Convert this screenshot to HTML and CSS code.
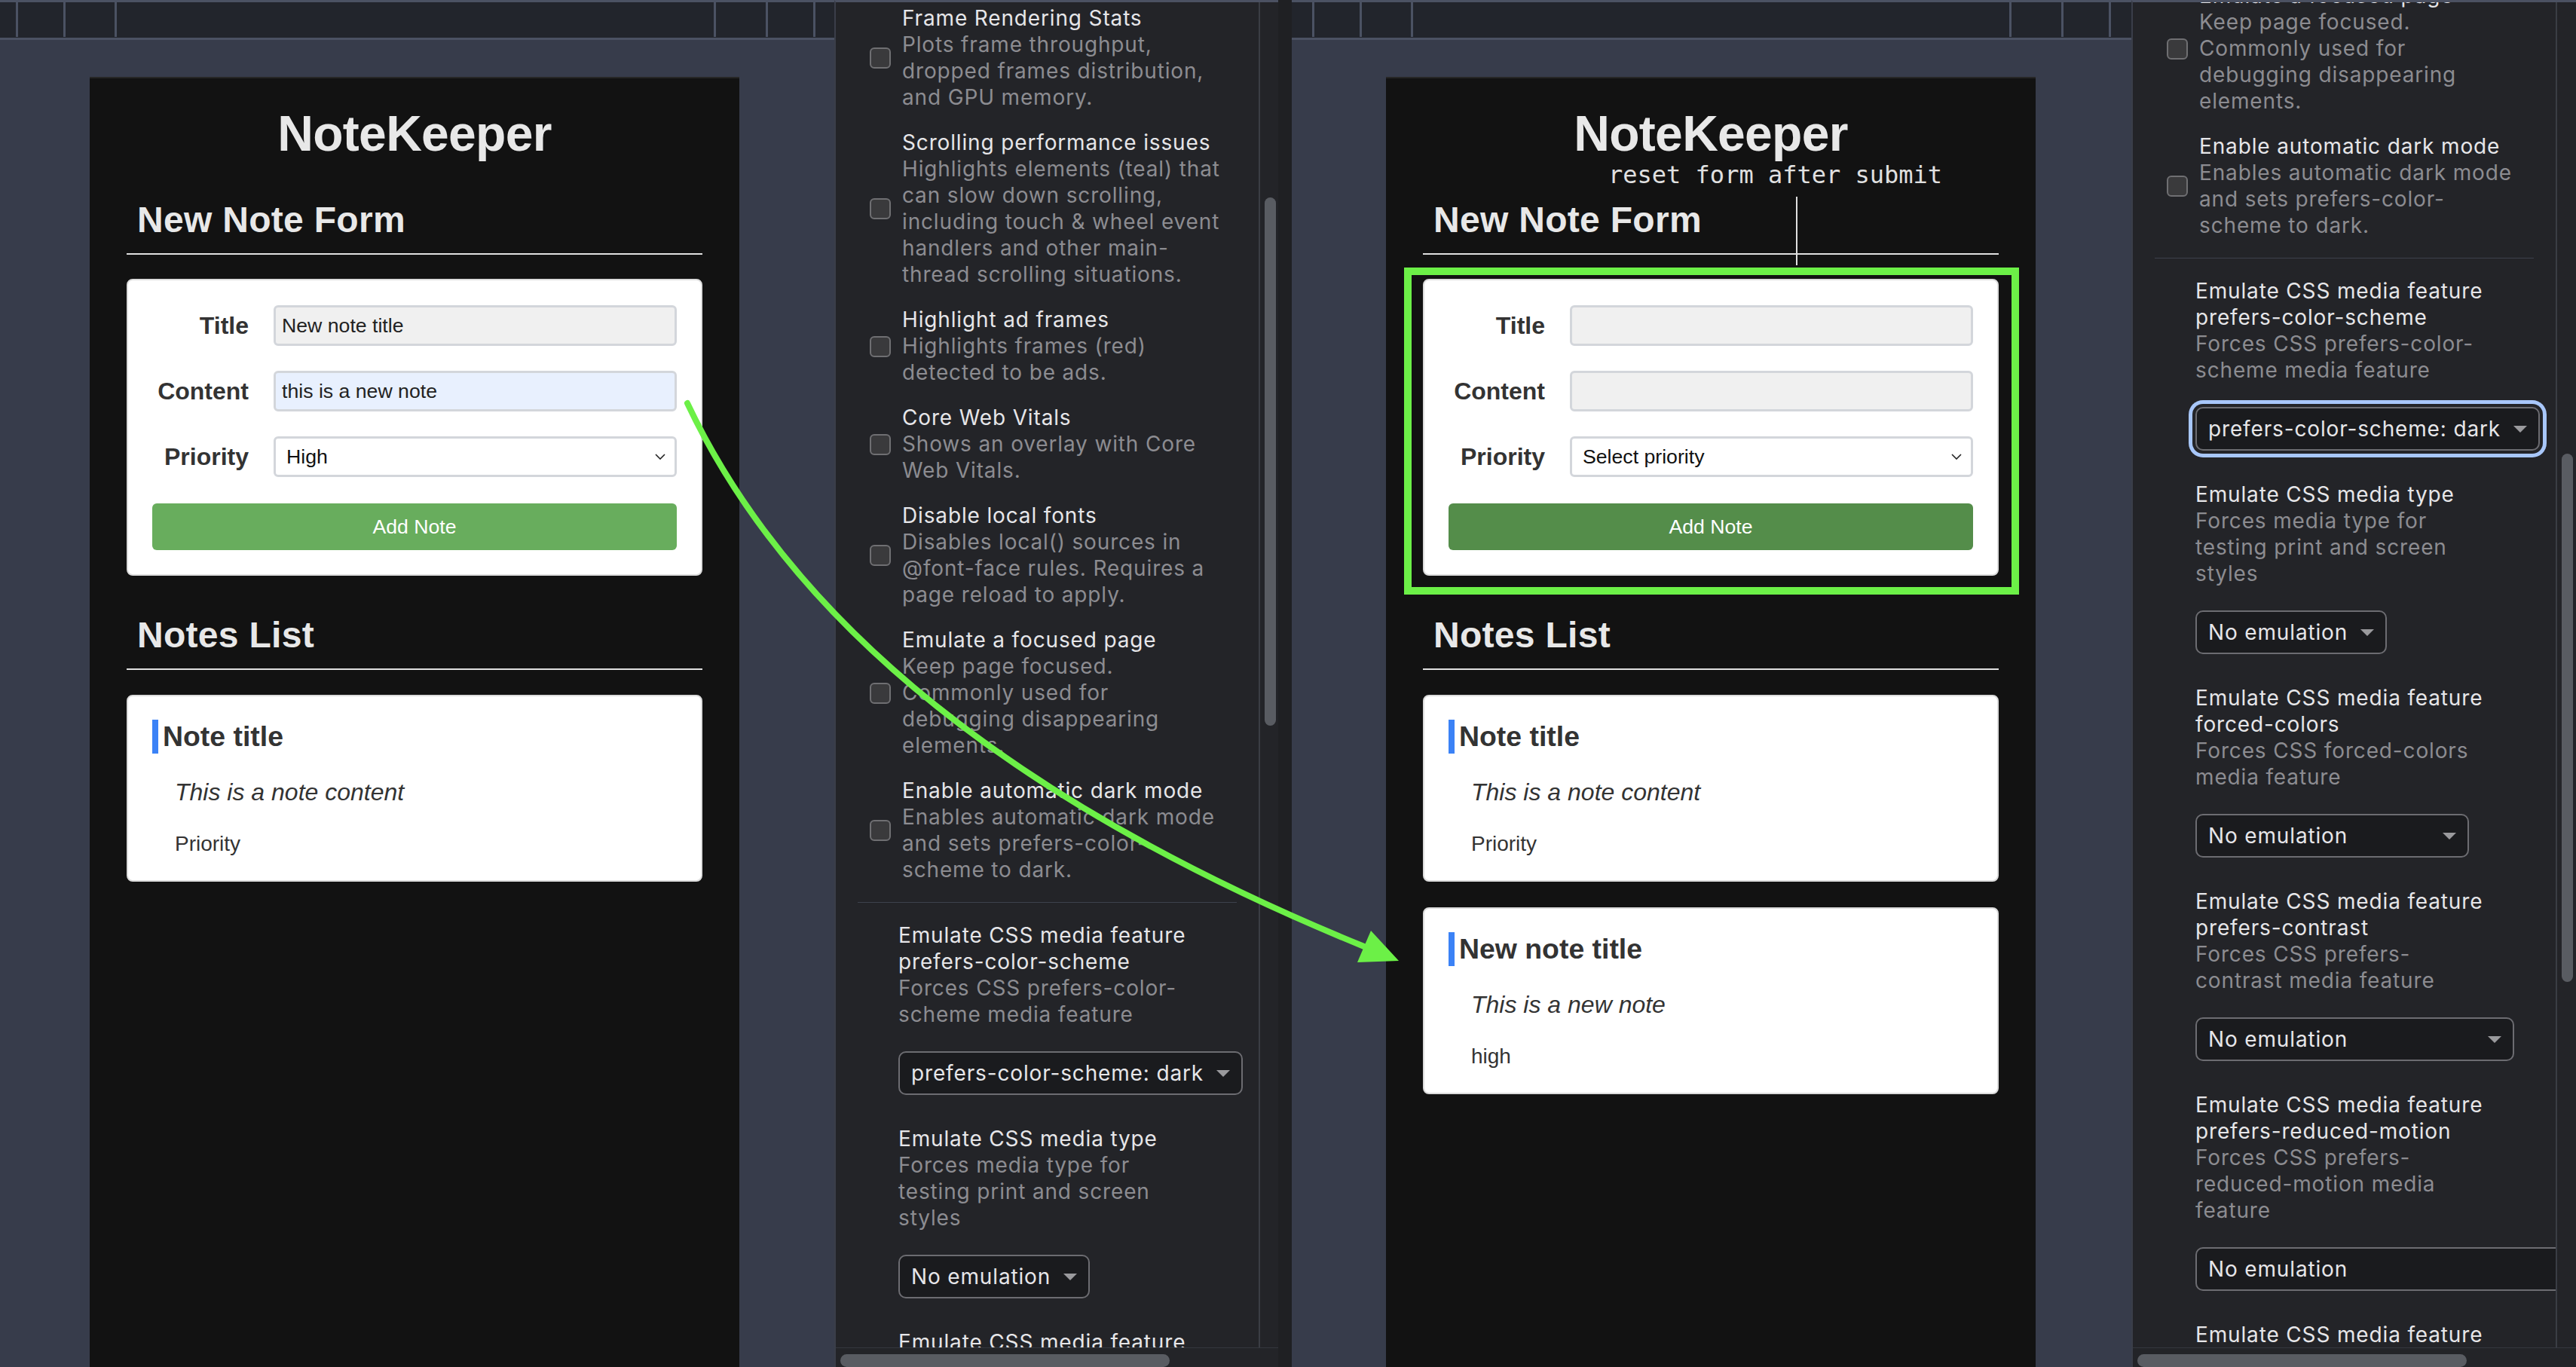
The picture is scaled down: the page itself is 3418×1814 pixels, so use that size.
FILE: index.html
```html
<!DOCTYPE html>
<html lang="en">
<head>
<meta charset="utf-8">
<title>NoteKeeper – reset form after submit</title>
<link rel="stylesheet" href="styles.css">
</head>
<body>
<div class="stage">

  <!-- LEFT: before submit -->
  <section class="viewport vp-left">
    <div class="topbar tb-left">
      <div class="tb-group"><span class="tb-div"></span><span class="tb-div g60"></span><span class="tb-div g65"></span></div>
      <div class="tb-group"><span class="tb-div"></span><span class="tb-div g66"></span><span class="tb-div g60"></span></div>
    </div>
    <div class="canvas cv-left">
      <main class="app">
        <h1 class="app-title">NoteKeeper</h1>
        <h2 class="sec-title">New Note Form</h2>
        <form class="form-card">
          <div class="form-grid">
            <label class="f-label">Title</label>
            <input class="f-input" type="text" value="New note title">
            <label class="f-label">Content</label>
            <input class="f-input autofill" type="text" value="this is a new note">
            <label class="f-label">Priority</label>
            <div class="f-select"><span>High</span><svg width="14" height="8" viewBox="0 0 14 8"><polyline points="1,1 7,7 13,1" fill="none" stroke="#222" stroke-width="1.6"/></svg></div>
          </div>
          <div class="f-btn">Add Note</div>
        </form>
        <h2 class="sec-title sec-notes">Notes List</h2>
        <article class="note">
          <h3 class="note-title">Note title</h3>
          <p class="note-body">This is a note content</p>
          <p class="note-prio">Priority</p>
        </article>
      </main>
    </div>
  </section>

  <aside class="devtools">
    <span class="dt-tabmark"></span>
    <div class="dt-body">
      <div class="dt-main">
        <div class="dt-list sc-a">
          <div class="cb-entry"><span class="cb"></span><div><div class="dt-title">Frame Rendering Stats</div><div class="dt-desc">Plots frame throughput,<br>dropped frames distribution,<br>and GPU memory.</div></div></div>
          <div class="cb-entry"><span class="cb"></span><div><div class="dt-title">Scrolling performance issues</div><div class="dt-desc">Highlights elements (teal) that<br>can slow down scrolling,<br>including touch &amp; wheel event<br>handlers and other main-<br>thread scrolling situations.</div></div></div>
          <div class="cb-entry"><span class="cb"></span><div><div class="dt-title">Highlight ad frames</div><div class="dt-desc">Highlights frames (red)<br>detected to be ads.</div></div></div>
          <div class="cb-entry"><span class="cb"></span><div><div class="dt-title">Core Web Vitals</div><div class="dt-desc">Shows an overlay with Core<br>Web Vitals.</div></div></div>
          <div class="cb-entry"><span class="cb"></span><div><div class="dt-title">Disable local fonts</div><div class="dt-desc">Disables local() sources in<br>@font-face rules. Requires a<br>page reload to apply.</div></div></div>
          <div class="cb-entry"><span class="cb"></span><div><div class="dt-title">Emulate a focused page</div><div class="dt-desc">Keep page focused.<br>Commonly used for<br>debugging disappearing<br>elements.</div></div></div>
          <div class="cb-entry"><span class="cb"></span><div><div class="dt-title">Enable automatic dark mode</div><div class="dt-desc">Enables automatic dark mode<br>and sets prefers-color-<br>scheme to dark.</div></div></div>
          <div class="dt-sep"></div>
          <div class="em-entry"><div class="dt-title">Emulate CSS media feature<br>prefers-color-scheme</div><div class="dt-desc">Forces CSS prefers-color-<br>scheme media feature</div>
            <div class="dt-select w457"><span>prefers-color-scheme: dark</span><svg class="caret" width="18" height="9" viewBox="0 0 18 9"><polygon points="0,0 18,0 9,9" fill="#9a9a9d"/></svg></div></div>
          <div class="em-entry"><div class="dt-title">Emulate CSS media type</div><div class="dt-desc">Forces media type for<br>testing print and screen<br>styles</div>
            <div class="dt-select w254"><span>No emulation</span><svg class="caret" width="18" height="9" viewBox="0 0 18 9"><polygon points="0,0 18,0 9,9" fill="#9a9a9d"/></svg></div></div>
          <div class="em-entry"><div class="dt-title">Emulate CSS media feature<br>forced-colors</div><div class="dt-desc">Forces CSS forced-colors<br>media feature</div>
            <div class="dt-select w363"><span>No emulation</span><svg class="caret" width="18" height="9" viewBox="0 0 18 9"><polygon points="0,0 18,0 9,9" fill="#9a9a9d"/></svg></div></div>
          <div class="em-entry"><div class="dt-title">Emulate CSS media feature<br>prefers-contrast</div><div class="dt-desc">Forces CSS prefers-<br>contrast media feature</div>
            <div class="dt-select w423"><span>No emulation</span><svg class="caret" width="18" height="9" viewBox="0 0 18 9"><polygon points="0,0 18,0 9,9" fill="#9a9a9d"/></svg></div></div>
          <div class="em-entry"><div class="dt-title">Emulate CSS media feature<br>prefers-reduced-motion</div><div class="dt-desc">Forces CSS prefers-<br>reduced-motion media<br>feature</div>
            <div class="dt-select w600"><span>No emulation</span><svg class="caret" width="18" height="9" viewBox="0 0 18 9"><polygon points="0,0 18,0 9,9" fill="#9a9a9d"/></svg></div></div>
          <div class="em-entry"><div class="dt-title">Emulate CSS media feature<br>prefers-reduced-transparency</div></div>
        </div>
      </div>
      <div class="dt-vscroll"><span class="dt-vthumb vt-a"></span></div>
    </div>
    <div class="dt-hscroll"><span class="dt-hthumb"></span></div>
  </aside>

  <div class="strip"></div>

  <!-- RIGHT: after submit -->
  <section class="viewport vp-right">
    <div class="topbar tb-right">
      <div class="tb-group"><span class="tb-div"></span><span class="tb-div g60"></span><span class="tb-div g65"></span></div>
      <div class="tb-group"><span class="tb-div"></span><span class="tb-div g66"></span><span class="tb-div g60"></span></div>
    </div>
    <div class="canvas cv-right">
      <main class="app">
        <h1 class="app-title">NoteKeeper</h1>
        <h2 class="sec-title">New Note Form</h2>
        <form class="form-card">
          <div class="form-grid">
            <label class="f-label">Title</label>
            <input class="f-input" type="text" value="">
            <label class="f-label">Content</label>
            <input class="f-input" type="text" value="">
            <label class="f-label">Priority</label>
            <div class="f-select"><span>Select priority</span><svg width="14" height="8" viewBox="0 0 14 8"><polyline points="1,1 7,7 13,1" fill="none" stroke="#222" stroke-width="1.6"/></svg></div>
          </div>
          <div class="f-btn pressed">Add Note</div>
        </form>
        <h2 class="sec-title sec-notes">Notes List</h2>
        <article class="note">
          <h3 class="note-title">Note title</h3>
          <p class="note-body">This is a note content</p>
          <p class="note-prio">Priority</p>
        </article>
        <article class="note">
          <h3 class="note-title">New note title</h3>
          <p class="note-body">This is a new note</p>
          <p class="note-prio">high</p>
        </article>

        <div class="annot">reset form after submit</div>
        <span class="annot-line"></span>
        <span class="focus-box"></span>
      </main>
    </div>
  </section>

  <aside class="devtools dt-right">
    <span class="dt-tabmark"></span>
    <div class="dt-body">
      <div class="dt-main">
        <div class="dt-list sc-b">
          <div class="cb-entry"><span class="cb"></span><div><div class="dt-title">Frame Rendering Stats</div><div class="dt-desc">Plots frame throughput,<br>dropped frames distribution,<br>and GPU memory.</div></div></div>
          <div class="cb-entry"><span class="cb"></span><div><div class="dt-title">Scrolling performance issues</div><div class="dt-desc">Highlights elements (teal) that<br>can slow down scrolling,<br>including touch &amp; wheel event<br>handlers and other main-<br>thread scrolling situations.</div></div></div>
          <div class="cb-entry"><span class="cb"></span><div><div class="dt-title">Highlight ad frames</div><div class="dt-desc">Highlights frames (red)<br>detected to be ads.</div></div></div>
          <div class="cb-entry"><span class="cb"></span><div><div class="dt-title">Core Web Vitals</div><div class="dt-desc">Shows an overlay with Core<br>Web Vitals.</div></div></div>
          <div class="cb-entry"><span class="cb"></span><div><div class="dt-title">Disable local fonts</div><div class="dt-desc">Disables local() sources in<br>@font-face rules. Requires a<br>page reload to apply.</div></div></div>
          <div class="cb-entry"><span class="cb"></span><div><div class="dt-title">Emulate a focused page</div><div class="dt-desc">Keep page focused.<br>Commonly used for<br>debugging disappearing<br>elements.</div></div></div>
          <div class="cb-entry"><span class="cb"></span><div><div class="dt-title">Enable automatic dark mode</div><div class="dt-desc">Enables automatic dark mode<br>and sets prefers-color-<br>scheme to dark.</div></div></div>
          <div class="dt-sep"></div>
          <div class="em-entry"><div class="dt-title">Emulate CSS media feature<br>prefers-color-scheme</div><div class="dt-desc">Forces CSS prefers-color-<br>scheme media feature</div>
            <div class="dt-select w457 focused"><span>prefers-color-scheme: dark</span><svg class="caret" width="18" height="9" viewBox="0 0 18 9"><polygon points="0,0 18,0 9,9" fill="#9a9a9d"/></svg></div></div>
          <div class="em-entry"><div class="dt-title">Emulate CSS media type</div><div class="dt-desc">Forces media type for<br>testing print and screen<br>styles</div>
            <div class="dt-select w254"><span>No emulation</span><svg class="caret" width="18" height="9" viewBox="0 0 18 9"><polygon points="0,0 18,0 9,9" fill="#9a9a9d"/></svg></div></div>
          <div class="em-entry"><div class="dt-title">Emulate CSS media feature<br>forced-colors</div><div class="dt-desc">Forces CSS forced-colors<br>media feature</div>
            <div class="dt-select w363"><span>No emulation</span><svg class="caret" width="18" height="9" viewBox="0 0 18 9"><polygon points="0,0 18,0 9,9" fill="#9a9a9d"/></svg></div></div>
          <div class="em-entry"><div class="dt-title">Emulate CSS media feature<br>prefers-contrast</div><div class="dt-desc">Forces CSS prefers-<br>contrast media feature</div>
            <div class="dt-select w423"><span>No emulation</span><svg class="caret" width="18" height="9" viewBox="0 0 18 9"><polygon points="0,0 18,0 9,9" fill="#9a9a9d"/></svg></div></div>
          <div class="em-entry"><div class="dt-title">Emulate CSS media feature<br>prefers-reduced-motion</div><div class="dt-desc">Forces CSS prefers-<br>reduced-motion media<br>feature</div>
            <div class="dt-select w600"><span>No emulation</span><svg class="caret" width="18" height="9" viewBox="0 0 18 9"><polygon points="0,0 18,0 9,9" fill="#9a9a9d"/></svg></div></div>
          <div class="em-entry"><div class="dt-title">Emulate CSS media feature<br>prefers-reduced-transparency</div></div>
        </div>
      </div>
      <div class="dt-vscroll"><span class="dt-vthumb vt-b"></span></div>
    </div>
    <div class="dt-hscroll"><span class="dt-hthumb"></span></div>
  </aside>
</div>

<svg class="arrow" width="3418" height="1814" viewBox="0 0 3418 1814">
  <path d="M 912 535 Q 1120 975 1810 1256" fill="none" stroke="#6cf047" stroke-width="8" stroke-linecap="round"/>
  <polygon points="1856,1275 1801,1277 1819,1235" fill="#6cf047"/>
</svg>
</body>
</html>
```

FILE: styles.css
```css
* { box-sizing: border-box; }
html, body { margin: 0; padding: 0; }
body {
  width: 3418px;
  height: 1814px;
  overflow: hidden;
  position: relative;
  background: #202124;
  font-family: "Liberation Sans", Arial, sans-serif;
}
.stage { display: flex; width: 3418px; height: 1814px; }

/* ---------- viewport ---------- */
.viewport {
  display: flex;
  flex-direction: column;
  flex: none;
  height: 1814px;
  background: #373c4b;
}
.vp-left { width: 1107px; }
.vp-right { width: 1114px; }

.topbar {
  flex: none;
  height: 53px;
  background: #22252c;
  border-top: 3px solid #4b5263;
  border-bottom: 3px solid #4b5263;
  display: flex;
  justify-content: space-between;
  align-items: flex-start;
}
.tb-left { padding: 0 25px 0 21px; }
.tb-right { padding: 0 27px 0 27px; }
.tb-group { display: flex; }
.tb-div { width: 3px; height: 46px; background: #4b5263; }
.g60 { margin-left: 60px; }
.g65 { margin-left: 65px; }
.g66 { margin-left: 66px; }

.canvas { flex: 1; padding-top: 49px; overflow: hidden; }
.cv-left { padding-left: 119px; }
.cv-right { padding-left: 125px; }

/* ---------- NoteKeeper app ---------- */
.app {
  position: relative;
  width: 862px;
  height: 100%;
  background: #121212;
  border-top: 2px solid #262626;
  padding: 35px 49px 0;
  color: #e8e8e8;
}
.app-title {
  margin: 0;
  font-size: 66px;
  line-height: 76px;
  font-weight: 700;
  text-align: center;
  letter-spacing: -0.7px;
}
.sec-title {
  margin: 49px 0 0;
  padding: 0 14px 16px;
  font-size: 48px;
  line-height: 56px;
  font-weight: 700;
  letter-spacing: 0.3px;
  border-bottom: 2px solid #e0e0e0;
}
.sec-notes { margin-top: 51px; }

.form-card {
  margin: 32px 0 0;
  background: #fff;
  border: 2px solid #dcdcdc;
  border-radius: 8px;
  padding: 33px 32px 32px;
}
.form-grid {
  display: grid;
  grid-template-columns: 128px 1fr;
  column-gap: 33px;
  row-gap: 33px;
  align-items: center;
}
.f-label {
  text-align: right;
  font-weight: 700;
  font-size: 32px;
  color: #333;
}
.f-input {
  display: block;
  width: 100%;
  height: 54px;
  margin: 0;
  border: 3px solid #d3d6db;
  border-radius: 6px;
  background: #f0f0f0;
  padding: 0 8px;
  font-family: "Liberation Sans", Arial, sans-serif;
  font-size: 26.67px;
  color: #222;
  outline: none;
}
.f-input.autofill { background: #e8f0fe; }
.f-select {
  display: flex;
  align-items: center;
  height: 54px;
  border: 3px solid #d3d6db;
  border-radius: 6px;
  background: #fff;
  padding: 0 12px 0 14px;
  font-size: 26.67px;
  color: #111;
}
.f-select svg { margin-left: auto; flex: none; }
.f-btn {
  display: flex;
  align-items: center;
  justify-content: center;
  margin-top: 35px;
  height: 62px;
  border-radius: 6px;
  background: #68ad5d;
  color: #fff;
  font-size: 26.67px;
}
.f-btn.pressed { background: #548d4a; }

.note {
  margin-top: 33px;
  background: #fff;
  border: 2px solid #dcdcdc;
  border-radius: 8px;
  padding: 31px 32px 32px;
  color: #333;
}
.note + .note { margin-top: 34px; }
.note-title {
  margin: 0;
  font-size: 37.4px;
  line-height: 45px;
  font-weight: 700;
  border-left: 8px solid #3b82f6;
  padding-left: 6px;
}
.note-body {
  margin: 33px 0 0 30px;
  font-size: 32px;
  line-height: 37px;
  font-style: italic;
}
.note-prio {
  margin: 34px 0 0 30px;
  font-size: 28px;
  line-height: 32px;
}

/* annotations on the right screenshot */
.annot {
  position: absolute;
  left: 295px;
  top: 110px;
  font-family: "DejaVu Sans Mono", "Liberation Mono", monospace;
  font-size: 32px;
  line-height: 36px;
  color: #e0e0e0;
  white-space: nowrap;
}
.annot-line {
  position: absolute;
  left: 544px;
  top: 157px;
  width: 2px;
  height: 91px;
  background: #e0e0e0;
}
.focus-box {
  position: absolute;
  left: 24px;
  top: 251px;
  width: 816px;
  height: 434px;
  border: 10px solid #6cf047;
}

/* ---------- DevTools rendering panel ---------- */
.devtools {
  position: relative;
  flex: none;
  width: 589px;
  height: 1814px;
  background: #232428;
  border-top: 3px solid #4b5162;
  border-left: 2px solid #3a3e49;
  display: flex;
  flex-direction: column;
  font-family: Inter, "Noto Sans", sans-serif;
  font-size: 28px;
  line-height: 35px;
  letter-spacing: 0.85px;
  overflow: hidden;
}
.dt-right { width: 590px; }
.dt-tabmark {
  position: absolute;
  left: 172px;
  top: -3px;
  width: 50px;
  height: 3px;
  background: #7b9ee3;
}
.dt-body {
  display: flex;
  flex: none;
  height: 1786px;
  border-bottom: 1px solid #34373e;
}
.dt-main {
  flex: none;
  width: 563px;
  border-right: 2px solid #3a3d44;
  overflow: hidden;
}
.dt-vscroll { flex: 1; }
.dt-vthumb {
  display: block;
  margin-left: 6px;
  width: 15px;
  height: 701px;
  border-radius: 8px;
  background: #595c62;
}
.vt-a { margin-top: 259px; }
.vt-b { margin-top: 599px; }
.dt-hscroll { flex: 1; }
.dt-hthumb {
  display: block;
  margin: 8px 0 0 6px;
  width: 437px;
  height: 17px;
  border-radius: 9px;
  background: #595c62;
}

.dt-list { display: flex; flex-direction: column; }
.sc-a { padding-top: 4px; }
.sc-b { margin-top: -851px; }

.cb-entry {
  display: flex;
  align-items: center;
  padding-left: 45px;
  margin-bottom: 25px;
}
.cb {
  flex: none;
  width: 28px;
  height: 28px;
  margin-right: 15px;
  border: 2px solid #6f6f72;
  border-radius: 6px;
  background: #3a3a3c;
}
.dt-title { color: #e6e6e9; white-space: nowrap; }
.dt-desc { color: #8c8c91; white-space: nowrap; }
.dt-sep {
  flex: none;
  height: 1px;
  margin: 0 29px 26px;
  background: #3d414c;
}
.em-entry { padding-left: 83px; margin-bottom: 41px; }
.dt-select {
  display: flex;
  align-items: center;
  margin-top: 31px;
  height: 58px;
  border: 2px solid #6c6c71;
  border-radius: 10px;
  background: #1a1b1e;
  padding: 0 15px;
  color: #e6e6e9;
  white-space: nowrap;
}
.dt-select .caret { margin-left: auto; flex: none; }
.dt-select.focused { box-shadow: 0 0 0 4px #232428, 0 0 0 9px #a8c7fa; }
.w457 { width: 457px; }
.w254 { width: 254px; }
.w363 { width: 363px; }
.w423 { width: 423px; }
.w600 { width: 600px; }

.strip { flex: none; width: 18px; height: 1814px; background: #1f2023; }

/* green arrow annotation */
.arrow {
  position: absolute;
  left: 0;
  top: 0;
  width: 3418px;
  height: 1814px;
  pointer-events: none;
}
```
